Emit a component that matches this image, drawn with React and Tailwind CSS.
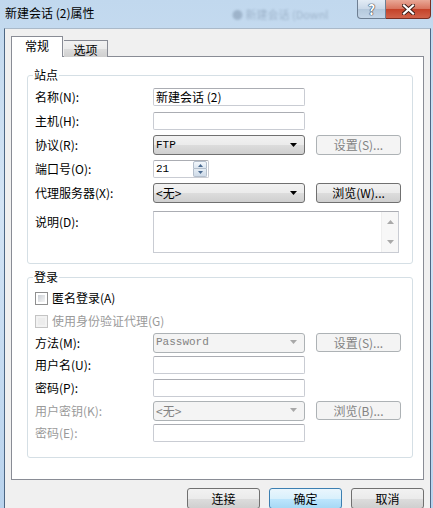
import React from "react";

function TextBox({ w = "w-[152px]", children }) {
  return (
    <div
      className={`${w} h-[18px] border border-[#c9ccd3] border-t-[#abadb3] bg-white rounded-[2px] flex items-center pl-[2px] text-[12px] text-black`}
    >
      {children}
    </div>
  );
}

function Arrow({ disabled }) {
  return (
    <svg width="8" height="5" viewBox="0 0 8 5" className="ml-auto mr-[6px]">
      <path d="M0 0 H7 L3.5 4 Z" fill={disabled ? "#a8a8a8" : "#000"} />
    </svg>
  );
}

function Combo({ children, disabled, mono }) {
  return (
    <div
      className={
        disabled
          ? "w-[152px] h-[20px] border border-[#adb2b5] rounded-[3px] bg-[#f4f4f4] flex items-center pl-[2px] text-[#838383]"
          : "w-[152px] h-[20px] border border-[#707070] rounded-[3px] bg-[linear-gradient(#f2f2f2,#ebebeb_50%,#dddddd_50%,#cfcfcf)] flex items-center pl-[2px] text-black"
      }
    >
      <span
        className={
          mono
            ? "font-['Liberation_Mono',monospace] text-[11px] leading-none"
            : "text-[12px] leading-none"
        }
      >
        {children}
      </span>
      <Arrow disabled={disabled} />
    </div>
  );
}

function Btn({ children, disabled, primary, w = "w-[85px]", h = "h-[20px]" }) {
  let cls =
    "border border-[#707070] bg-[linear-gradient(#f2f2f2,#ebebeb_50%,#dddddd_50%,#cfcfcf)] text-black";
  if (disabled) cls = "border border-[#adb2b5] bg-[#f4f4f4] text-[#838383]";
  if (primary)
    cls =
      "border border-[#3c7fb1] bg-[linear-gradient(#eaf6fd,#d9f0fc_50%,#bee6fd_50%,#a7d9f5)] text-black";
  return (
    <div
      className={`${w} ${h} ${cls} rounded-[3px] flex items-center justify-center text-[12px] leading-none`}
    >
      {children}
    </div>
  );
}

function Label({ children, disabled }) {
  return (
    <div
      className={`w-[118px] shrink-0 text-[12px] leading-none ${disabled ? "text-[#9a9a9a]" : "text-black"}`}
    >
      {children}
    </div>
  );
}

function Check({ children, disabled }) {
  return (
    <div className="flex items-center gap-[4px]">
      <div
        className={
          disabled
            ? "w-[13px] h-[13px] border border-[#c4c4c4] bg-[#f2f2f2] p-[2px]"
            : "w-[13px] h-[13px] border border-[#8f8f8f] bg-white p-[2px]"
        }
      >
        <div
          className={
            disabled
              ? "w-full h-full bg-[#ececec]"
              : "w-full h-full bg-[linear-gradient(135deg,#cbcfd5,#f6f6f6)]"
          }
        />
      </div>
      <span
        className={`text-[12px] leading-none ${disabled ? "text-[#9a9a9a]" : "text-black"}`}
      >
        {children}
      </span>
    </div>
  );
}

export default function App() {
  return (
    <div className="w-[433px] h-[508px] overflow-hidden flex flex-col bg-[linear-gradient(180deg,#c1d8ee,#d3e4f5_40%,#b9d3ed)] font-['Noto_Sans_CJK_SC',sans-serif]">
      {/* title bar */}
      <div className="h-[28px] shrink-0 flex items-start relative">
        <span className="pl-[5px] pt-[7px] text-[12px] leading-none text-black">
          新建会话 (2)属性
        </span>
        <span className="absolute left-[232px] top-[9px] text-[11px] leading-none text-[#4b5f7a] opacity-30 blur-[1px]">
          ● 新建会话 (Downl
        </span>
        <div className="ml-auto mr-[2px] flex">
          <div className="w-[29px] h-[19px] border border-[#6e7f93] border-t-0 rounded-bl-[4px] bg-[linear-gradient(#e3ecf5,#c9d8e8_50%,#b4c8dc_50%,#c4d6e8)] flex items-center justify-center">
            <span className="text-[14px] font-bold leading-none text-white [text-shadow:0_0_1px_#2b3a4d,0_0_1px_#2b3a4d,0_0_1px_#2b3a4d]">
              ?
            </span>
          </div>
          <div className="w-[45px] h-[19px] border border-[#7a2e22] border-t-0 border-l-0 rounded-br-[4px] bg-[linear-gradient(#e9a897,#d8735d_50%,#c44128_50%,#d1624a)] flex items-center justify-center">
            <svg width="13" height="11" viewBox="0 0 13 11">
              <path
                d="M2 1.5 L11 9.5 M11 1.5 L2 9.5"
                stroke="#3a1a14"
                strokeWidth="4"
                strokeLinecap="square"
              />
              <path
                d="M2 1.5 L11 9.5 M11 1.5 L2 9.5"
                stroke="#fff"
                strokeWidth="2.2"
                strokeLinecap="square"
              />
            </svg>
          </div>
        </div>
      </div>

      {/* client area */}
      <div className="flex-1 ml-[4px] mr-[2px] bg-[#f0f0f0] border-l border-r border-t border-l-[#4d6784] border-r-[#4d6784] border-t-[#aab9c9] flex flex-col">
        {/* tabs */}
        <div className="pt-[7px] pl-[6px] flex items-end relative z-10 -mb-[1px]">
          <div className="w-[52px] h-[21px] border border-b-0 border-[#898c95] bg-white flex items-center justify-center text-[12px] leading-none pb-[2px]">
            常规
          </div>
          <div className="w-[44px] h-[17px] ml-[1px] border border-b-0 border-l-0 border-[#898c95] bg-[linear-gradient(#f2f2f2,#ebebeb_50%,#dddddd_50%,#cfcfcf)] flex items-center justify-center text-[12px] leading-none pt-[2px]">
            选项
          </div>
        </div>

        {/* tab panel */}
        <div className="ml-[6px] w-[413px] h-[424px] border border-[#898c95] bg-white pl-[15px] pr-[10px] pt-[11px]">
          <fieldset className="border border-[#d5dfe5] rounded-[3px] p-0 pb-[10px]">
            <legend className="ml-[5px] px-[1px] text-[12px] leading-[14px]">
              站点
            </legend>
            <div className="mt-[3px] pl-[7px] flex flex-col">
              <div className="h-[24px] flex items-center">
                <Label>名称(N):</Label>
                <TextBox>新建会话 (2)</TextBox>
              </div>
              <div className="h-[24px] flex items-center">
                <Label>主机(H):</Label>
                <TextBox />
              </div>
              <div className="h-[24px] flex items-center">
                <Label>协议(R):</Label>
                <Combo mono>FTP</Combo>
                <div className="ml-[11px]">
                  <Btn disabled>设置(S)...</Btn>
                </div>
              </div>
              <div className="h-[24px] flex items-center">
                <Label>端口号(O):</Label>
                <div className="w-[56px] h-[18px] border border-[#c9ccd3] border-t-[#abadb3] bg-white rounded-[2px] flex items-center pl-[2px]">
                  <span className="font-['Liberation_Mono',monospace] text-[11px] leading-none">
                    21
                  </span>
                  <div className="ml-auto mr-[1px] w-[14px] h-[16px] flex flex-col">
                    <div className="h-[8px] border border-[#b4bfcc] bg-[linear-gradient(#f4f8fc,#dce6f0)] rounded-t-[2px] flex items-center justify-center">
                      <svg width="5" height="3" viewBox="0 0 5 3">
                        <path d="M0 3 L2.5 0 L5 3 Z" fill="#4a6a90" />
                      </svg>
                    </div>
                    <div className="h-[8px] border border-t-0 border-[#b4bfcc] bg-[linear-gradient(#e4ecf4,#cfdbe8)] rounded-b-[2px] flex items-center justify-center">
                      <svg width="5" height="3" viewBox="0 0 5 3">
                        <path d="M0 0 L5 0 L2.5 3 Z" fill="#4a6a90" />
                      </svg>
                    </div>
                  </div>
                </div>
              </div>
              <div className="h-[24px] flex items-center">
                <Label>代理服务器(X):</Label>
                <Combo>{"<无>"}</Combo>
                <div className="ml-[11px]">
                  <Btn>浏览(W)...</Btn>
                </div>
              </div>
              <div className="mt-[6px] flex items-start">
                <div className="pt-[5px]">
                  <Label>说明(D):</Label>
                </div>
                <div className="w-[246px] h-[42px] border border-[#c9ccd3] border-t-[#abadb3] bg-white flex justify-end">
                  <div className="w-[17px] h-full bg-[#f7f7f7] border-l border-[#eeeeee] flex flex-col items-center justify-between py-[8px]">
                    <svg width="7" height="4" viewBox="0 0 7 4">
                      <path d="M0 4 L3.5 0 L7 4 Z" fill="#a9a9a9" />
                    </svg>
                    <svg width="7" height="4" viewBox="0 0 7 4">
                      <path d="M0 0 L7 0 L3.5 4 Z" fill="#a9a9a9" />
                    </svg>
                  </div>
                </div>
              </div>
            </div>
          </fieldset>

          <fieldset className="mt-[6px] border border-[#d5dfe5] rounded-[3px] p-0 pb-[13px]">
            <legend className="ml-[5px] px-[1px] text-[12px] leading-[14px]">
              登录
            </legend>
            <div className="mt-[2px] pl-[7px] flex flex-col">
              <div className="h-[24px] flex items-center">
                <Check>匿名登录(A)</Check>
              </div>
              <div className="h-[22px] flex items-center">
                <Check disabled>使用身份验证代理(G)</Check>
              </div>
              <div className="h-[21px] flex items-center">
                <Label>方法(M):</Label>
                <Combo disabled mono>
                  Password
                </Combo>
                <div className="ml-[11px]">
                  <Btn disabled h="h-[19px]">
                    设置(S)...
                  </Btn>
                </div>
              </div>
              <div className="h-[23px] flex items-center">
                <Label>用户名(U):</Label>
                <TextBox />
              </div>
              <div className="h-[23px] flex items-center">
                <Label>密码(P):</Label>
                <TextBox />
              </div>
              <div className="h-[23px] flex items-center">
                <Label disabled>用户密钥(K):</Label>
                <Combo disabled>{"<无>"}</Combo>
                <div className="ml-[11px]">
                  <Btn disabled h="h-[19px]">
                    浏览(B)...
                  </Btn>
                </div>
              </div>
              <div className="h-[22px] flex items-center">
                <Label disabled>密码(E):</Label>
                <TextBox />
              </div>
            </div>
          </fieldset>
        </div>

        {/* dialog buttons */}
        <div className="mt-[8px] pr-[6px] flex justify-end gap-[9px]">
          <Btn w="w-[73px]" h="h-[21px]">
            连接
          </Btn>
          <Btn w="w-[73px]" h="h-[21px]" primary>
            确定
          </Btn>
          <Btn w="w-[73px]" h="h-[21px]">
            取消
          </Btn>
        </div>
      </div>
    </div>
  );
}
